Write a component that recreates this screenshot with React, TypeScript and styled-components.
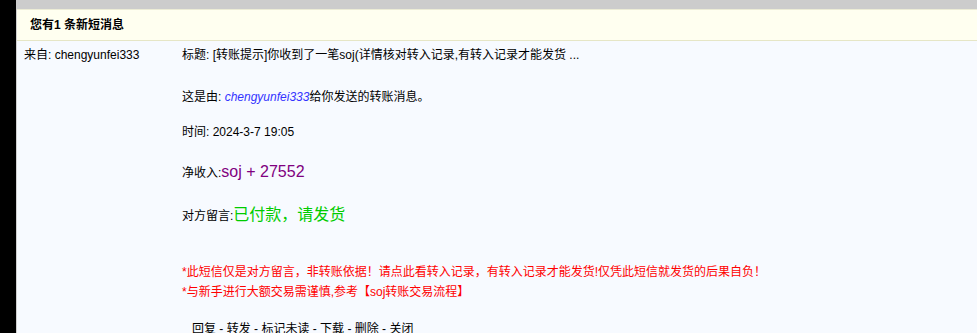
import React, { FC } from 'react'
import styled, { createGlobalStyle } from 'styled-components'

const GlobalStyle = createGlobalStyle`
	html, body {
		margin: 0;
		padding: 0;
		background: #000;
	}
	body {
		font-family: "Liberation Sans", "Noto Sans CJK SC", sans-serif;
		font-size: 12px;
		color: #000;
	}
`

const actions = ['回复', '转发', '标记未读', '下载', '删除', '关闭']

const App: FC = () => {
	return (
		<>
			<GlobalStyle />
			<StyledPage>
				<StyledTopBar />
				<StyledPanel>
					<StyledHeader>您有1 条新短消息</StyledHeader>
					<StyledBody>
						<StyledSender>来自: chengyunfei333</StyledSender>
						<StyledMessage>
							<StyledLine>
								标题: [转账提示]你收到了一笔soj(详情核对转入记录,有转入记录才能发货 ...
							</StyledLine>
							<StyledLine $gap={22}>
								这是由: <StyledUser>chengyunfei333</StyledUser>给你发送的转账消息。
							</StyledLine>
							<StyledLine $gap={15}>时间: 2024-3-7 19:05</StyledLine>
							<StyledLine $gap={20}>
								净收入:<StyledAmount>soj + 27552</StyledAmount>
							</StyledLine>
							<StyledLine $gap={22}>
								对方留言:<StyledNote>已付款，请发货</StyledNote>
							</StyledLine>
							<StyledWarning $gap={36}>
								*此短信仅是对方留言，非转账依据！请点此看转入记录，有转入记录才能发货!仅凭此短信就发货的后果自负！
							</StyledWarning>
							<StyledWarning>*与新手进行大额交易需谨慎,参考【soj转账交易流程】</StyledWarning>
							<StyledActions>
								{actions.map((action, i) => (
									<React.Fragment key={action}>
										{i > 0 && ' - '}
										<StyledAction>{action}</StyledAction>
									</React.Fragment>
								))}
							</StyledActions>
						</StyledMessage>
					</StyledBody>
				</StyledPanel>
			</StyledPage>
		</>
	)
}

export default App

const StyledPage = styled.div`
	height: 333px;
	overflow: hidden;
	background: #000;
	padding-left: 16px;
`

const StyledTopBar = styled.div`
	height: 9px;
	background: #cccccc;
`

const StyledPanel = styled.div`
	background: #f7faff;
	border-left: 1px solid #cfcfcf;
	height: 324px;
`

const StyledHeader = styled.div`
	height: 30px;
	line-height: 30px;
	padding-left: 13px;
	background: #fffff0;
	border-top: 1px solid #ececd6;
	border-bottom: 1px solid #e6e6c6;
	font-weight: bold;
	font-size: 12px;
`

const StyledBody = styled.div`
	display: grid;
	grid-template-columns: 165px 1fr;
	padding-top: 4px;
`

const StyledSender = styled.div`
	padding-left: 7px;
	line-height: 20px;
`

const StyledMessage = styled.div`
	display: flex;
	flex-direction: column;
`

const StyledLine = styled.div<{ $gap?: number }>`
	line-height: 20px;
	margin-top: ${({ $gap }) => $gap ?? 0}px;
	white-space: nowrap;
`

const StyledUser = styled.span`
	color: #3333ff;
	font-style: italic;
`

const StyledAmount = styled.span`
	color: #800080;
	font-size: 16px;
`

const StyledNote = styled.span`
	color: #00cc00;
	font-size: 16px;
`

const StyledWarning = styled(StyledLine)`
	color: #ff0000;
`

const StyledActions = styled.div`
	line-height: 20px;
	margin-top: 17px;
	padding-left: 10px;
`

const StyledAction = styled.span`
	cursor: pointer;
`
